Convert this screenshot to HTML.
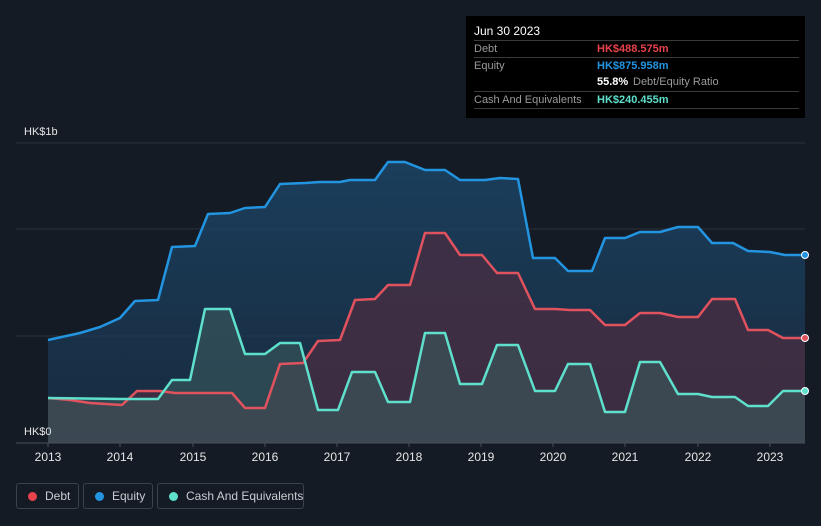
<!DOCTYPE html>
<html><head><meta charset="utf-8"><style>
body{margin:0;width:821px;height:526px;background:#151b25;font-family:"Liberation Sans",sans-serif;overflow:hidden;position:relative}
.tt{position:absolute;left:466px;top:16px;width:339px;height:102px;background:#000;color:#fff;font-size:11px}
.tt .r{position:absolute;left:8px;right:6px;border-top:1px solid #3a3a3a;height:17px;line-height:17px;color:#9a9a9a;white-space:nowrap}
.tt .v{position:absolute;left:123px;font-weight:bold}
.leg{position:absolute;top:483px;height:26px;border:1px solid #3b424c;border-radius:3px;color:#c9ccd0;font-size:12px;line-height:24px;box-sizing:border-box;white-space:nowrap}
.leg i{position:absolute;left:11px;top:8px;width:9px;height:9px;border-radius:50%}
.leg span{position:absolute;left:28px;white-space:nowrap}
.yr{position:absolute;top:450px;color:#e6e6e6;font-size:12px;width:40px;text-align:center}
</style></head><body>
<svg width="821" height="526" style="position:absolute;left:0;top:0">
<defs>
<linearGradient id="eq" x1="0" y1="0" x2="0" y2="1"><stop offset="0" stop-color="#1c4a6e" stop-opacity=".75"/><stop offset="1" stop-color="#1a3550" stop-opacity=".6"/></linearGradient>
</defs>
<line x1="16" y1="143" x2="805" y2="143" stroke="#2a313c"/>
<line x1="16" y1="229" x2="805" y2="229" stroke="#2a313c"/>
<line x1="16" y1="336" x2="805" y2="336" stroke="#2a313c"/>
<polygon fill="url(#eq)" points="48,443 48,340 80,333 100,327 120,318 135,301 158,300 172,247 195,246 208,214 230,213 245,208 265,207 280,184 305,183 320,182 340,182 350,180 375,180 388,162 405,162 425,170 445,170 460,180 485,180 500,178 518,179 533,258 555,258 568,271 592,271 605,238 625,238 640,232 660,232 678,227 698,227 712,243 733,243 748,251 770,252 785,255 805,255 805,443"/>
<polygon fill="#4a2e42" fill-opacity=".75" points="48,443 48,398 70,400 90,403 122,405 137,391 160,391 175,393 232,393 245,408 265,408 280,364 303,363 318,341 340,340 355,300 375,299 388,285 410,285 425,233 445,233 460,255 482,255 497,273 518,273 535,309 555,309 570,310 590,310 605,325 625,325 640,313 660,313 678,317 698,317 712,299 735,299 748,330 768,330 783,338 805,338 805,443"/>
<polygon fill="#3a5a5e" fill-opacity=".6" points="48,443 48,398 122,399 158,399 172,380 190,380 205,309 230,309 245,354 265,354 280,343 300,343 318,410 338,410 352,372 375,372 388,402 410,402 425,333 445,333 460,384 482,384 497,345 518,345 535,391 555,391 568,364 590,364 605,412 625,412 640,362 660,362 678,394 698,394 712,397 735,397 748,406 768,406 783,391 805,391 805,443"/>
<g fill="none" stroke-width="2.5" stroke-linejoin="round">
<polyline stroke="#2394e0" points="48,340 80,333 100,327 120,318 135,301 158,300 172,247 195,246 208,214 230,213 245,208 265,207 280,184 305,183 320,182 340,182 350,180 375,180 388,162 405,162 425,170 445,170 460,180 485,180 500,178 518,179 533,258 555,258 568,271 592,271 605,238 625,238 640,232 660,232 678,227 698,227 712,243 733,243 748,251 770,252 785,255 805,255"/>
<polyline stroke="#e0525e" points="48,398 70,400 90,403 122,405 137,391 160,391 175,393 232,393 245,408 265,408 280,364 303,363 318,341 340,340 355,300 375,299 388,285 410,285 425,233 445,233 460,255 482,255 497,273 518,273 535,309 555,309 570,310 590,310 605,325 625,325 640,313 660,313 678,317 698,317 712,299 735,299 748,330 768,330 783,338 805,338"/>
<polyline stroke="#5ee0cc" points="48,398 122,399 158,399 172,380 190,380 205,309 230,309 245,354 265,354 280,343 300,343 318,410 338,410 352,372 375,372 388,402 410,402 425,333 445,333 460,384 482,384 497,345 518,345 535,391 555,391 568,364 590,364 605,412 625,412 640,362 660,362 678,394 698,394 712,397 735,397 748,406 768,406 783,391 805,391"/>
</g>
<circle cx="805" cy="255" r="3.5" fill="#2394e0" stroke="#fff" stroke-width="1"/>
<circle cx="805" cy="338" r="3.5" fill="#e0525e" stroke="#fff" stroke-width="1"/>
<circle cx="805" cy="391" r="3.5" fill="#5ee0cc" stroke="#fff" stroke-width="1"/>
<line x1="16" y1="443" x2="805" y2="443" stroke="#4a525c"/>
<g stroke="#4a525c"><line x1="48" y1="443" x2="48" y2="447"/><line x1="120" y1="443" x2="120" y2="447"/><line x1="193" y1="443" x2="193" y2="447"/><line x1="265" y1="443" x2="265" y2="447"/><line x1="337" y1="443" x2="337" y2="447"/><line x1="409" y1="443" x2="409" y2="447"/><line x1="481" y1="443" x2="481" y2="447"/><line x1="553" y1="443" x2="553" y2="447"/><line x1="625" y1="443" x2="625" y2="447"/><line x1="698" y1="443" x2="698" y2="447"/><line x1="770" y1="443" x2="770" y2="447"/></g>
<text x="24" y="135" fill="#e6e6e6" font-size="11" font-family="Liberation Sans">HK$1b</text>
<text x="24" y="435" fill="#e6e6e6" font-size="11" font-family="Liberation Sans">HK$0</text>
</svg>
<div class="yr" style="left:28px">2013</div><div class="yr" style="left:100px">2014</div><div class="yr" style="left:173px">2015</div><div class="yr" style="left:245px">2016</div><div class="yr" style="left:317px">2017</div><div class="yr" style="left:389px">2018</div><div class="yr" style="left:461px">2019</div><div class="yr" style="left:533px">2020</div><div class="yr" style="left:605px">2021</div><div class="yr" style="left:678px">2022</div><div class="yr" style="left:750px">2023</div>
<div class="tt">
<div style="position:absolute;left:8px;top:8px;font-size:12px">Jun 30 2023</div>
<div class="r" style="top:24px">Debt<span class="v" style="color:#e8424a">HK$488.575m</span></div>
<div class="r" style="top:41px">Equity<span class="v" style="color:#2394e0">HK$875.958m</span></div>
<div class="r" style="top:58px;border-top:none"><span class="v" style="color:#fff">55.8%</span><span style="position:absolute;left:159px;color:#9a9a9a">Debt/Equity Ratio</span></div>
<div class="r" style="top:75px">Cash And Equivalents<span class="v" style="color:#5ee0cc">HK$240.455m</span></div>
<div class="r" style="top:92px;height:0"></div>
</div>
<div class="leg" style="left:16px;width:63px"><i style="background:#e8424a"></i><span>Debt</span></div>
<div class="leg" style="left:83px;width:70px"><i style="background:#2394e0"></i><span>Equity</span></div>
<div class="leg" style="left:157px;width:147px"><i style="background:#5ee0cc"></i><span>Cash And Equivalents</span></div>
</body></html>
